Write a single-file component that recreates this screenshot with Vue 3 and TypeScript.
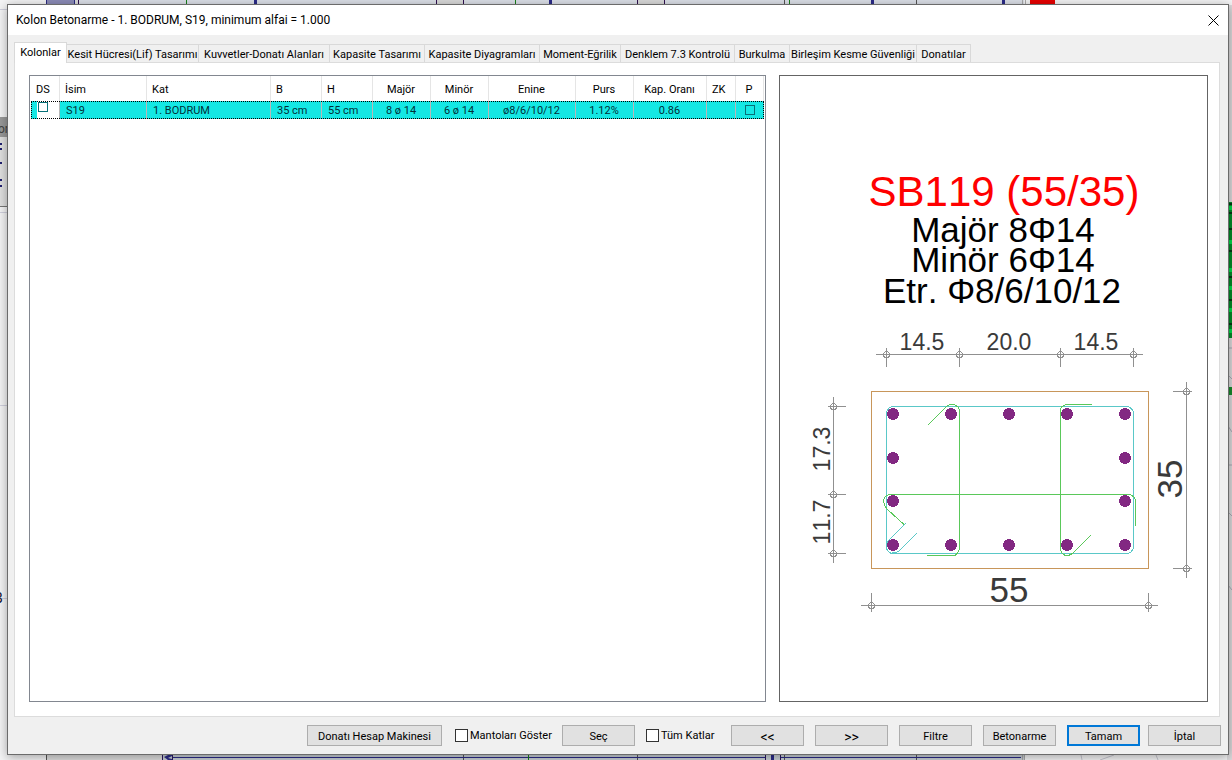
<script setup lang="ts">
import { ref } from 'vue'

interface Column {
  title: string
  width: number
  align: 'left' | 'center'
}

const tabs: string[] = [
  'Kolonlar',
  'Kesit Hücresi(Lif) Tasarımı',
  'Kuvvetler-Donatı Alanları',
  'Kapasite Tasarımı',
  'Kapasite Diyagramları',
  'Moment-Eğrilik',
  'Denklem 7.3 Kontrolü',
  'Burkulma',
  'Birleşim Kesme Güvenliği',
  'Donatılar',
]
const activeTab = ref(0)

const columns: Column[] = [
  { title: 'DS', width: 29, align: 'left' },
  { title: 'İsim', width: 87, align: 'left' },
  { title: 'Kat', width: 124, align: 'left' },
  { title: 'B', width: 51, align: 'left' },
  { title: 'H', width: 51, align: 'left' },
  { title: 'Majör', width: 58, align: 'center' },
  { title: 'Minör', width: 58, align: 'center' },
  { title: 'Enine', width: 87, align: 'center' },
  { title: 'Purs', width: 58, align: 'center' },
  { title: 'Kap. Oranı', width: 73, align: 'center' },
  { title: 'ZK', width: 29, align: 'left' },
  { title: 'P', width: 28, align: 'center' },
]
const cells: string[] = ['S19', '1. BODRUM', '35 cm', '55 cm', '8 ø 14', '6 ø 14', 'ø8/6/10/12', '1.12%', '0.86', '']

const selected = ref(false)
const pinned = ref(false)
const showJackets = ref(false)
const allFloors = ref(false)

const bars: [number, number][] = [
  ...[893, 951, 1009, 1067, 1125].flatMap((x): [number, number][] => [[x, 414], [x, 545]]),
  ...[893, 1125].flatMap((x): [number, number][] => [[x, 458], [x, 501]]),
]
const topTicks = [886.5, 959.5, 1060.5, 1133.5]
const leftTicks = [406.5, 494.5, 553.5]
const rightTicks = [391.5, 568.5]
const bottomTicks = [871.5, 1148.5]
</script>

<template>
  <div class="desktop">
    <svg class="backdrop" viewBox="0 0 1232 760" preserveAspectRatio="none" aria-hidden="true">
      <rect width="1232" height="760" fill="#f4f4f5" />
      <rect x="46" width="978" height="5" fill="#dce0e8" />
      <rect x="46" width="28" height="5" fill="#8c8cb8" />
      <rect x="74" width="4" height="5" fill="#ddd" />
      <path d="M46.5 0v5M74.5 0v5" stroke="#2b2b80" />
      <path d="M78.5 0v5M436.5 0v5M463.5 0v5M637.5 0v5M664.5 0v5" stroke="#301050" />
      <path d="M437 0h26v5h-26zM638 0h26v5h-26z" fill="#dadada" />
      <path d="M186.5 0v5M515.5 0v5M789.5 0v5" stroke="#188018" />
      <path d="M254 0h3v5h-3zM549 0h3v5h-3zM871 0h3v5h-3zM1002 0h3v5h-3z" fill="#2b2b88" />
      <path d="M784.5 0v5M916.5 0v5" stroke="#555" />
      <path d="M1022.5 0v5M1025.5 0v5" stroke="#aaa" />
      <rect x="1030" width="25" height="5" fill="#e80000" />
      <rect y="117" width="8" height="90" fill="#e0e0e0" />
      <rect y="117" width="8" height="20" fill="#999" />
      <path d="M0 206.5h8" stroke="#777" />
      <path d="M0 9.5h8M0 212.5h8M0 405.5h8M0 598.5h8" stroke="#d0d0dd" />
      <path d="M0 143h2v2H0zM0 148h2v2H0zM0 162h2v2H0zM0 179h2v2H0zM0 185h2v2H0z" fill="#202070" />
      <text class="stray" x="-2" y="133">or</text>
      <text class="stray dark" x="-6" y="603">B</text>
      <rect x="1227" y="5" width="5" height="755" fill="#dcdadc" />
      <rect x="1228" y="202" width="4" height="136" fill="#008c28" />
      <path d="M1228 204h4M1228 213h4M1228 229h4M1228 251h4M1228 277h4M1228 300h4M1228 324h4" stroke="#003c14" stroke-width="2" />
      <path d="M1228 208h4M1228 242h4M1228 270h4M1228 288h4M1228 310h4M1228 331h4" stroke="#00d848" stroke-width="4" />
      <rect x="1228" y="387" width="4" height="8" fill="#178a2c" />
      <path d="M1228 348h4M1228 375l4 4M1228 426l4 6M1228 465h4M1228 512l4 4M1228 585l4 5" stroke="#aaa8b4" />
      <path d="M46 755h978v5H46z" fill="#c9d0d6" />
      <path d="M46 755h117v5H46z" fill="#dedede" />
      <path d="M46.5 755v5M463.5 755v5M637.5 755v5M784.5 755v5M916.5 755v5" stroke="#555" />
      <path d="M172 757.5h593M781 757.5h240" stroke="#2b2b88" />
      <path d="M162.5 755v5M172.5 755v5M765.5 755v5M780.5 755v5" stroke="#2b1760" />
      <path d="M771 755h3v5h-3zM164 757l4-2h4v1l-4 2 4 1v1h-4z" fill="#2b2b88" />
      <path d="M528.5 755v5" stroke="#188018" />
      <path d="M1022.5 755v5M1024.5 755v5" stroke="#aaa" />
      <path d="M1100 760l14-5M1081 755l1 5M1156 755l2 5" stroke="#c6c6d0" fill="none" />
    </svg>

    <main class="dialog">
      <header class="titlebar">
        <h1>Kolon Betonarme - 1. BODRUM, S19, minimum alfai = 1.000</h1>
        <button class="close" aria-label="Kapat">
          <svg width="11" height="11" viewBox="0 0 11 11"><path d="M.5.5l10 10M10.5.5l-10 10" stroke="#000" /></svg>
        </button>
      </header>

      <div class="content">
        <nav class="tabs" role="tablist">
          <button
            v-for="(tab, i) in tabs"
            :key="tab"
            role="tab"
            class="tab"
            :class="{ active: i === activeTab }"
            :aria-selected="i === activeTab"
            @click="activeTab = i"
          >{{ tab }}</button>
        </nav>

        <section class="page">
          <div class="list">
            <table>
              <colgroup>
                <col v-for="c in columns" :key="c.title" :style="{ width: c.width + 'px' }">
              </colgroup>
              <thead>
                <tr>
                  <th v-for="c in columns" :key="c.title" :class="c.align">{{ c.title }}</th>
                </tr>
              </thead>
              <tbody>
                <tr>
                  <td class="pick"><span><input v-model="selected" type="checkbox" aria-label="DS"></span></td>
                  <td v-for="(cell, i) in cells" :key="i" :class="columns[i + 1].align">{{ cell }}</td>
                  <td class="center"><input v-model="pinned" type="checkbox" aria-label="P"></td>
                </tr>
              </tbody>
            </table>
          </div>

          <div class="preview">
            <svg viewBox="780 76 427 625" role="img" aria-label="SB119 (55/35)">
              <g class="caption">
                <text class="name" x="1004" y="206">SB119 (55/35)</text>
                <text x="1003" y="242">Majör 8Φ14</text>
                <text x="1003" y="272">Minör 6Φ14</text>
                <text x="1002" y="303">Etr. Φ8/6/10/12</text>
              </g>

              <g class="line dim">
                <path d="M876 354.5H1143M833.5 397V563M1186.5 382V578M861 605.5H1158" />
                <g v-for="x in topTicks" :key="x">
                  <path :d="`M${x} 348V367`" />
                  <circle :cx="x" cy="354.5" r="3" />
                </g>
                <g v-for="y in leftTicks" :key="y">
                  <path :d="`M828 ${y}H846`" />
                  <circle cx="833.5" :cy="y" r="3" />
                </g>
                <g v-for="y in rightTicks" :key="y">
                  <path :d="`M1173 ${y}H1192`" />
                  <circle cx="1186.5" :cy="y" r="3" />
                </g>
                <g v-for="x in bottomTicks" :key="x">
                  <path :d="`M${x} 593V612`" />
                  <circle :cx="x" cy="605.5" r="3" />
                </g>
              </g>

              <g class="measure">
                <text x="922" y="350">14.5</text>
                <text x="1009" y="350">20.0</text>
                <text x="1096" y="350">14.5</text>
                <text transform="translate(830 449) rotate(-90)">17.3</text>
                <text transform="translate(830 522) rotate(-90)">11.7</text>
                <text class="total" x="1009" y="602">55</text>
                <text class="total" transform="translate(1182 479) rotate(-90)">35</text>
              </g>

              <rect class="line concrete" x="871.5" y="391.5" width="277" height="177" />
              <circle v-for="(b, i) in bars" :key="i" class="bar" :cx="b[0]" :cy="b[1]" r="6" />
              <path
                class="line stirrup"
                d="M905.5 523.5L888 541Q886.500 543 886.500 546V414.500Q886.500 406.500 894.500 406.500H1125.500Q1133.500 406.500 1133.500 414.500V545.500Q1133.500 553.500 1125.500 553.500H893.500Q886.500 553.500 886.500 546M892 553Q897 553 900 550L917 533"
              />
              <path
                class="line tie"
                d="M928 425L945 408Q948 404.500 952 404.500Q959.500 405 959.500 412V547Q959.500 552 955 555.500H927M1092 404.500H1067Q1060.500 405 1060.500 411V548Q1061 555.500 1067.500 555.500Q1071 555.500 1074 552L1091 535M904 524.500L887 509Q883.500 505 883.500 501Q884 496 889 494.500H1128Q1135.500 495 1135.500 502V526"
              />
            </svg>
          </div>
        </section>
      </div>

      <footer class="footer">
        <div class="actions">
          <button class="btn wide">Donatı Hesap Makinesi</button>
          <label class="check jackets"><input v-model="showJackets" type="checkbox">Mantoları Göster</label>
          <button class="btn">Seç</button>
          <label class="check floors"><input v-model="allFloors" type="checkbox">Tüm Katlar</label>
          <button class="btn step">&lt;&lt;</button>
          <button class="btn step">&gt;&gt;</button>
          <button class="btn">Filtre</button>
          <button class="btn">Betonarme</button>
          <button class="btn primary">Tamam</button>
        </div>
        <button class="btn">İptal</button>
      </footer>
    </main>
  </div>
</template>

<style>
html,
body {
  height: 100%;
  margin: 0;
}
#app {
  height: 100%;
}
</style>

<style scoped>
* {
  box-sizing: border-box;
}
.desktop {
  position: relative;
  display: flex;
  min-height: 100%;
  padding: 4px 3px 5px 7px;
  overflow: hidden;
  font-family: Roboto, "Liberation Sans", sans-serif;
  font-size: 11px;
  color: #000;
}
.backdrop {
  position: absolute;
  inset: 0;
  width: 100%;
  height: 100%;
}
.stray {
  font-size: 12px;
  fill: #444;
}
.stray.dark {
  font-size: 14px;
  fill: #101030;
}
.dialog {
  position: relative;
  flex: 1;
  min-width: 0;
  display: flex;
  flex-direction: column;
  background: #f0f0f0;
  border: 1px solid #6b6b6b;
  box-shadow: 0 2px 10px rgba(0, 0, 0, 0.35);
}
.titlebar {
  display: flex;
  align-items: center;
  justify-content: space-between;
  height: 30px;
  padding: 0 9px 0 8px;
  background: #fff;
}
h1 {
  margin: 0;
  font-size: 12px;
  font-weight: 400;
}
button {
  font: inherit;
  color: inherit;
}
.close {
  display: flex;
  padding: 0;
  border: 0;
  background: none;
}
.content {
  flex: 1;
  display: flex;
  flex-direction: column;
  padding: 7px 8px 0 6px;
}
.tabs {
  display: grid;
  grid-template-columns: 53px 132px 131px 95px 115px 81px 114px 55px 127px 54px;
  height: 20px;
}
.tab {
  padding: 2px 0 0;
  margin-top: 2px;
  border: 1px solid #d9d9d9;
  border-left: 0;
  border-bottom: 0;
  background: #f0f0f0;
  white-space: nowrap;
}
.tab.active {
  position: relative;
  z-index: 1;
  margin: 0 0 -1px;
  padding: 0 0 2px;
  border-left: 1px solid #d9d9d9;
  background: #fff;
}
.page {
  flex: 1;
  display: grid;
  grid-template-columns: 737fr 429fr;
  gap: 13px;
  padding: 12px 11px 14px 14px;
  border: 1px solid #dcdcdc;
  background: #fff;
}
.list {
  padding: 0 1px;
  border: 1px solid #828790;
}
table {
  width: 100%;
  table-layout: fixed;
  border-collapse: separate;
  border-spacing: 0;
}
th {
  height: 25px;
  padding: 2px 5px 0;
  border-right: 1px solid #e5e5e5;
  font-weight: 400;
  white-space: nowrap;
}
td {
  height: 18px;
  padding: 2px 5px 0 6px;
  border-right: 1px solid #b8b8b8;
  line-height: 16px;
  white-space: nowrap;
  background: #14e8e4;
  color: #003038;
}
td:last-child {
  border-right: 0;
}
.left {
  text-align: left;
}
.center {
  padding-left: 4px;
  padding-right: 5px;
  text-align: center;
}
tbody tr {
  outline: 1px dotted #000;
  outline-offset: -1px;
}
.pick {
  padding: 0 0 0 6px;
}
.pick span {
  display: flex;
  height: 18px;
  padding: 1px;
  background: #fff;
}
input {
  appearance: none;
  flex: none;
  width: 10px;
  height: 10px;
  margin: 0;
  border: 1px solid #087078;
  vertical-align: middle;
}
td.center input {
  display: block;
  margin: 1px auto 3px;
}
input:checked {
  background: #087078;
}
.preview {
  display: flex;
  border: 1px solid #646464;
  min-width: 0;
}
.preview svg {
  width: 100%;
  height: 100%;
}
.preview text {
  font-family: "Liberation Sans", Arial, sans-serif;
  font-kerning: none;
  text-anchor: middle;
}
.caption {
  font-size: 35px;
}
.caption .name {
  font-size: 42px;
  fill: #f00;
}
.measure {
  font-size: 23px;
  fill: #3a3a3a;
}
.measure .total {
  font-size: 35px;
}
.line {
  fill: none;
  shape-rendering: crispEdges;
}
.dim {
  stroke: #909090;
}
.concrete {
  stroke: #c8965a;
}
.stirrup {
  stroke: #5ac8c8;
}
.tie {
  stroke: #5ac85a;
}
.bar {
  fill: #822882;
  shape-rendering: crispEdges;
}
.footer {
  display: flex;
  justify-content: flex-end;
  gap: 8px;
  padding: 8px 7px 8px 6px;
}
.actions {
  display: flex;
  gap: 11px;
}
.btn {
  width: 73px;
  height: 21px;
  padding: 2px 0 0;
  border: 1px solid #adadad;
  background: #e1e1e1;
}
.btn.wide {
  width: 135px;
}
.btn.step {
  font-size: 14px;
  line-height: 14px;
}
.btn.primary {
  border: 2px solid #0078d7;
}
.check {
  display: flex;
  align-items: center;
  gap: 2px;
  white-space: nowrap;
}
.check input {
  width: 13px;
  height: 13px;
  border-color: #333;
  background: #fff;
}
.check input:checked {
  background: #333;
}
.jackets {
  width: 98px;
  padding-left: 2px;
}
.floors {
  width: 74px;
}
</style>
